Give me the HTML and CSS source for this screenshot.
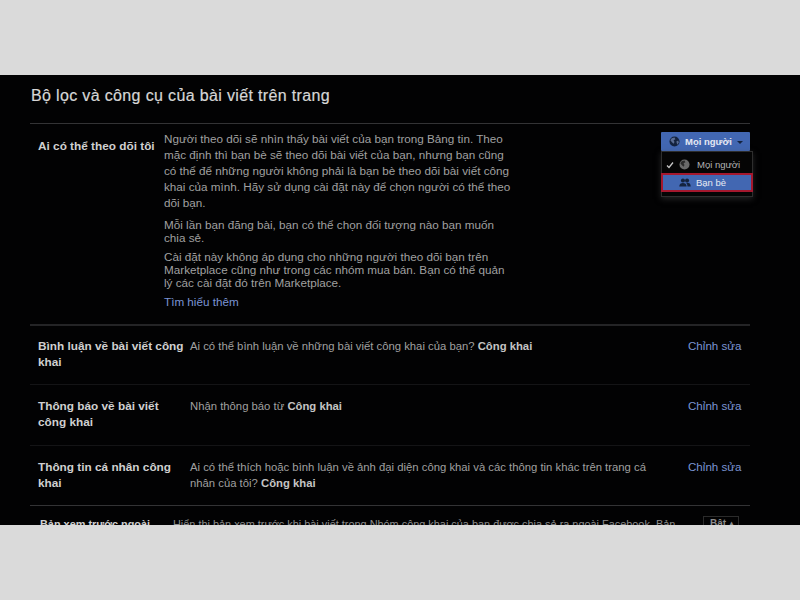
FILE: index.html
```html
<!DOCTYPE html>
<html lang="vi">
<head>
    <meta charset="UTF-8" />
    <title>Bộ lọc và công cụ của bài viết trên trang</title>
    <link rel="stylesheet" href="styles.css">
</head>
<body>

<div class="band"></div>

<div class="panel">
    <h1 class="title">Bộ lọc và công cụ của bài viết trên trang</h1>

    <div class="row row-follow">
        <div class="label label-follow">Ai có thể theo dõi tôi</div>
        <div class="desc desc-follow">
            <p>Người theo dõi sẽ nhìn thấy bài viết của bạn trong Bảng tin. Theo<br>mặc định thì bạn bè sẽ theo dõi bài viết của bạn, nhưng bạn cũng<br>có thể để những người không phải là bạn bè theo dõi bài viết công<br>khai của mình. Hãy sử dụng cài đặt này để chọn người có thể theo<br>dõi bạn.</p>
            <p class="note">Mỗi lần bạn đăng bài, bạn có thể chọn đối tượng nào bạn muốn<br>chia sẻ.</p>
            <p class="note note-last">Cài đặt này không áp dụng cho những người theo dõi bạn trên<br>Marketplace cũng như trong các nhóm mua bán. Bạn có thể quản<br>lý các cài đặt đó trên Marketplace.</p>
            <a class="more">Tìm hiểu thêm</a>
        </div>
        <div class="audience">
            <button class="audience-btn">
                <svg class="globe" viewBox="0 0 12 12"><circle cx="6" cy="6" r="5.5" fill="#14233f"/><path d="M3 2.5l3-1 1 2-2 1 1 2-1 2-2-2-1.500-2zM8 6l2-1 .8 2-1.800 2.500z" fill="#5a6c92"/></svg>
                <span>Mọi người</span>
                <span class="caret"></span>
            </button>
            <div class="menu">
                <div class="menu-item">
                    <svg class="check" viewBox="0 0 8 8"><path d="M1 4.500l2 2L7 1.500" fill="none" stroke="#c8c8c8" stroke-width="1.300"/></svg>
                    <svg class="globe" viewBox="0 0 12 12"><circle cx="6" cy="6" r="5.500" fill="#6a6a6a"/><path d="M3 2.500l3-1 1 2-2 1 1 2-1 2-2-2-1.500-2z" fill="#2c2c2c"/></svg>
                    Mọi người
                </div>
                <div class="menu-item selected">
                    <svg class="friends" viewBox="0 0 14 11"><circle cx="4.500" cy="3" r="2.500" fill="#14233f"/><circle cx="9.500" cy="3" r="2.500" fill="#14233f"/><path d="M0 10.500c0-3.500 2-4.500 4.500-4.500S9 7 9 10.500zM10 10.500c0-2-.5-3.500-1.500-4.500 3-.5 5.500.5 5.500 4.500z" fill="#14233f"/></svg>
                    Bạn bè
                </div>
            </div>
        </div>
    </div>

    <div class="row row-strong">
        <div class="label">Bình luận về bài viết công khai</div>
        <div class="desc">Ai có thể bình luận về những bài viết công khai của bạn? <b>Công khai</b></div>
        <a class="edit">Chỉnh sửa</a>
    </div>
    <div class="row">
        <div class="label">Thông báo về bài viết<br>công khai</div>
        <div class="desc">Nhận thông báo từ <b>Công khai</b></div>
        <a class="edit">Chỉnh sửa</a>
    </div>
    <div class="row">
        <div class="label">Thông tin cá nhân công<br>khai</div>
        <div class="desc">Ai có thể thích hoặc bình luận về ảnh đại diện công khai và các thông tin khác trên trang cá<br>nhân của tôi? <b>Công khai</b></div>
        <a class="edit">Chỉnh sửa</a>
    </div>
    <div class="row row-last">
        <div class="label label-last">Bản xem trước ngoài</div>
        <div class="desc desc-last">Hiển thị bản xem trước khi bài viết trong Nhóm công khai của bạn được chia sẻ ra ngoài Facebook. Bản</div>
        <span class="toggle">Bật ▴</span>
    </div>
</div>

<div class="band"></div>

</body>
</html>
```

FILE: styles.css
```css
* {
    box-sizing: border-box;
}

body {
    margin: 0;
    height: 600px;
    overflow: hidden;
    display: flex;
    flex-direction: column;
    background: #dadada;
    font-family: "Liberation Sans", Arial, sans-serif;
}

.band {
    height: 75px;
    background: #dadada;
}

.panel {
    height: 450px;
    overflow: hidden;
    background: #020203;
    padding: 0 50px 0 30px;
    color: #a0a0a0;
    font-size: 11.3px;
    line-height: 16px;
}

.title {
    margin: 0;
    height: 48px;
    padding-top: 11px;
    padding-left: 1px;
    font-size: 16px;
    line-height: 20px;
    font-weight: normal;
    letter-spacing: 0.35px;
    color: #d6d6d6;
    -webkit-text-stroke: 0.2px #d6d6d6;
}

.row {
    position: relative;
    display: flex;
    height: 60.500px;
    padding: 13px 8px 0 8px;
    border-top: 1px solid #141416;
}

.row-follow {
    height: 201px;
    padding-top: 7px;
    border-top-color: #333335;
}

.row-strong {
    height: 60px;
    border-top: 2px solid #242426;
    padding-top: 12px;
}

.row-last {
    border-top-color: #333335;
    padding: 10px 0 0 10px;
    font-size: 10.9px;
}

.label {
    width: 152px;
    flex-shrink: 0;
    font-size: 11.8px;
    font-weight: bold;
    color: #d0d0d0;
}

.label-follow {
    width: 126px;
    margin-top: 7px;
}

.label-last {
    width: 133px;
    font-size: 10.9px;
}

.desc {
    flex: 1;
}

.desc b {
    color: #c4c4c4;
}

.desc-last {
    flex: none;
    width: 509px;
    white-space: nowrap;
    color: #8e8e8e;
}

.desc-follow {
    font-size: 11.7px;
}

.desc-follow p {
    margin: 0 0 6.500px;
}

.desc-follow .note {
    line-height: 13px;
}

.desc-follow .note-last {
    margin-bottom: 4.500px;
}

.more,
.edit {
    color: #7b94d3;
}

.edit {
    width: 54px;
    margin-left: auto;
    font-size: 11.6px;
    white-space: nowrap;
}

.toggle {
    margin-left: 21px;
    width: 36px;
    height: 24px;
    padding-left: 6px;
    border: 1px solid #2b2b2b;
    font-size: 10px;
    line-height: 14px;
    font-weight: bold;
    white-space: nowrap;
    color: #8c8c8c;
}

.audience {
    position: absolute;
    top: 8px;
    right: 0;
    width: 90px;
}

.audience-btn {
    display: flex;
    align-items: center;
    gap: 5px;
    width: 89px;
    height: 19px;
    margin-left: 1px;
    padding: 0 0 0 8px;
    border: 0;
    border-radius: 1px;
    background: #4267b2;
    color: #e6e9f2;
    font: bold 9.500px "Liberation Sans", Arial, sans-serif;
}

.globe {
    width: 11px;
    height: 11px;
    flex-shrink: 0;
}

.caret {
    margin-top: 2px;
    border: 3.500px solid transparent;
    border-top-color: #14233f;
    border-bottom: 0;
}

.menu {
    position: absolute;
    top: 19px;
    left: 1px;
    width: 92px;
    padding: 3px 0 4px;
    border: 1px solid #2e2e2e;
    background: #050505;
    box-shadow: 0 2px 6px rgba(70, 70, 70, 0.5);
}

.menu-item {
    display: flex;
    align-items: center;
    height: 19px;
    padding-left: 4px;
    font-size: 9.500px;
    color: #b4b4b4;
}

.check {
    width: 8px;
    height: 8px;
    margin-right: 5px;
}

.menu-item .globe {
    margin-right: 7px;
}

.menu-item.selected {
    height: 19px;
    margin: -1px -1px 0;
    padding-left: 16px;
    background: #4267b2;
    border: 2px solid #a5182e;
    color: #e6e9f2;
}

.friends {
    width: 12px;
    height: 9px;
    margin-right: 5px;
}
```
